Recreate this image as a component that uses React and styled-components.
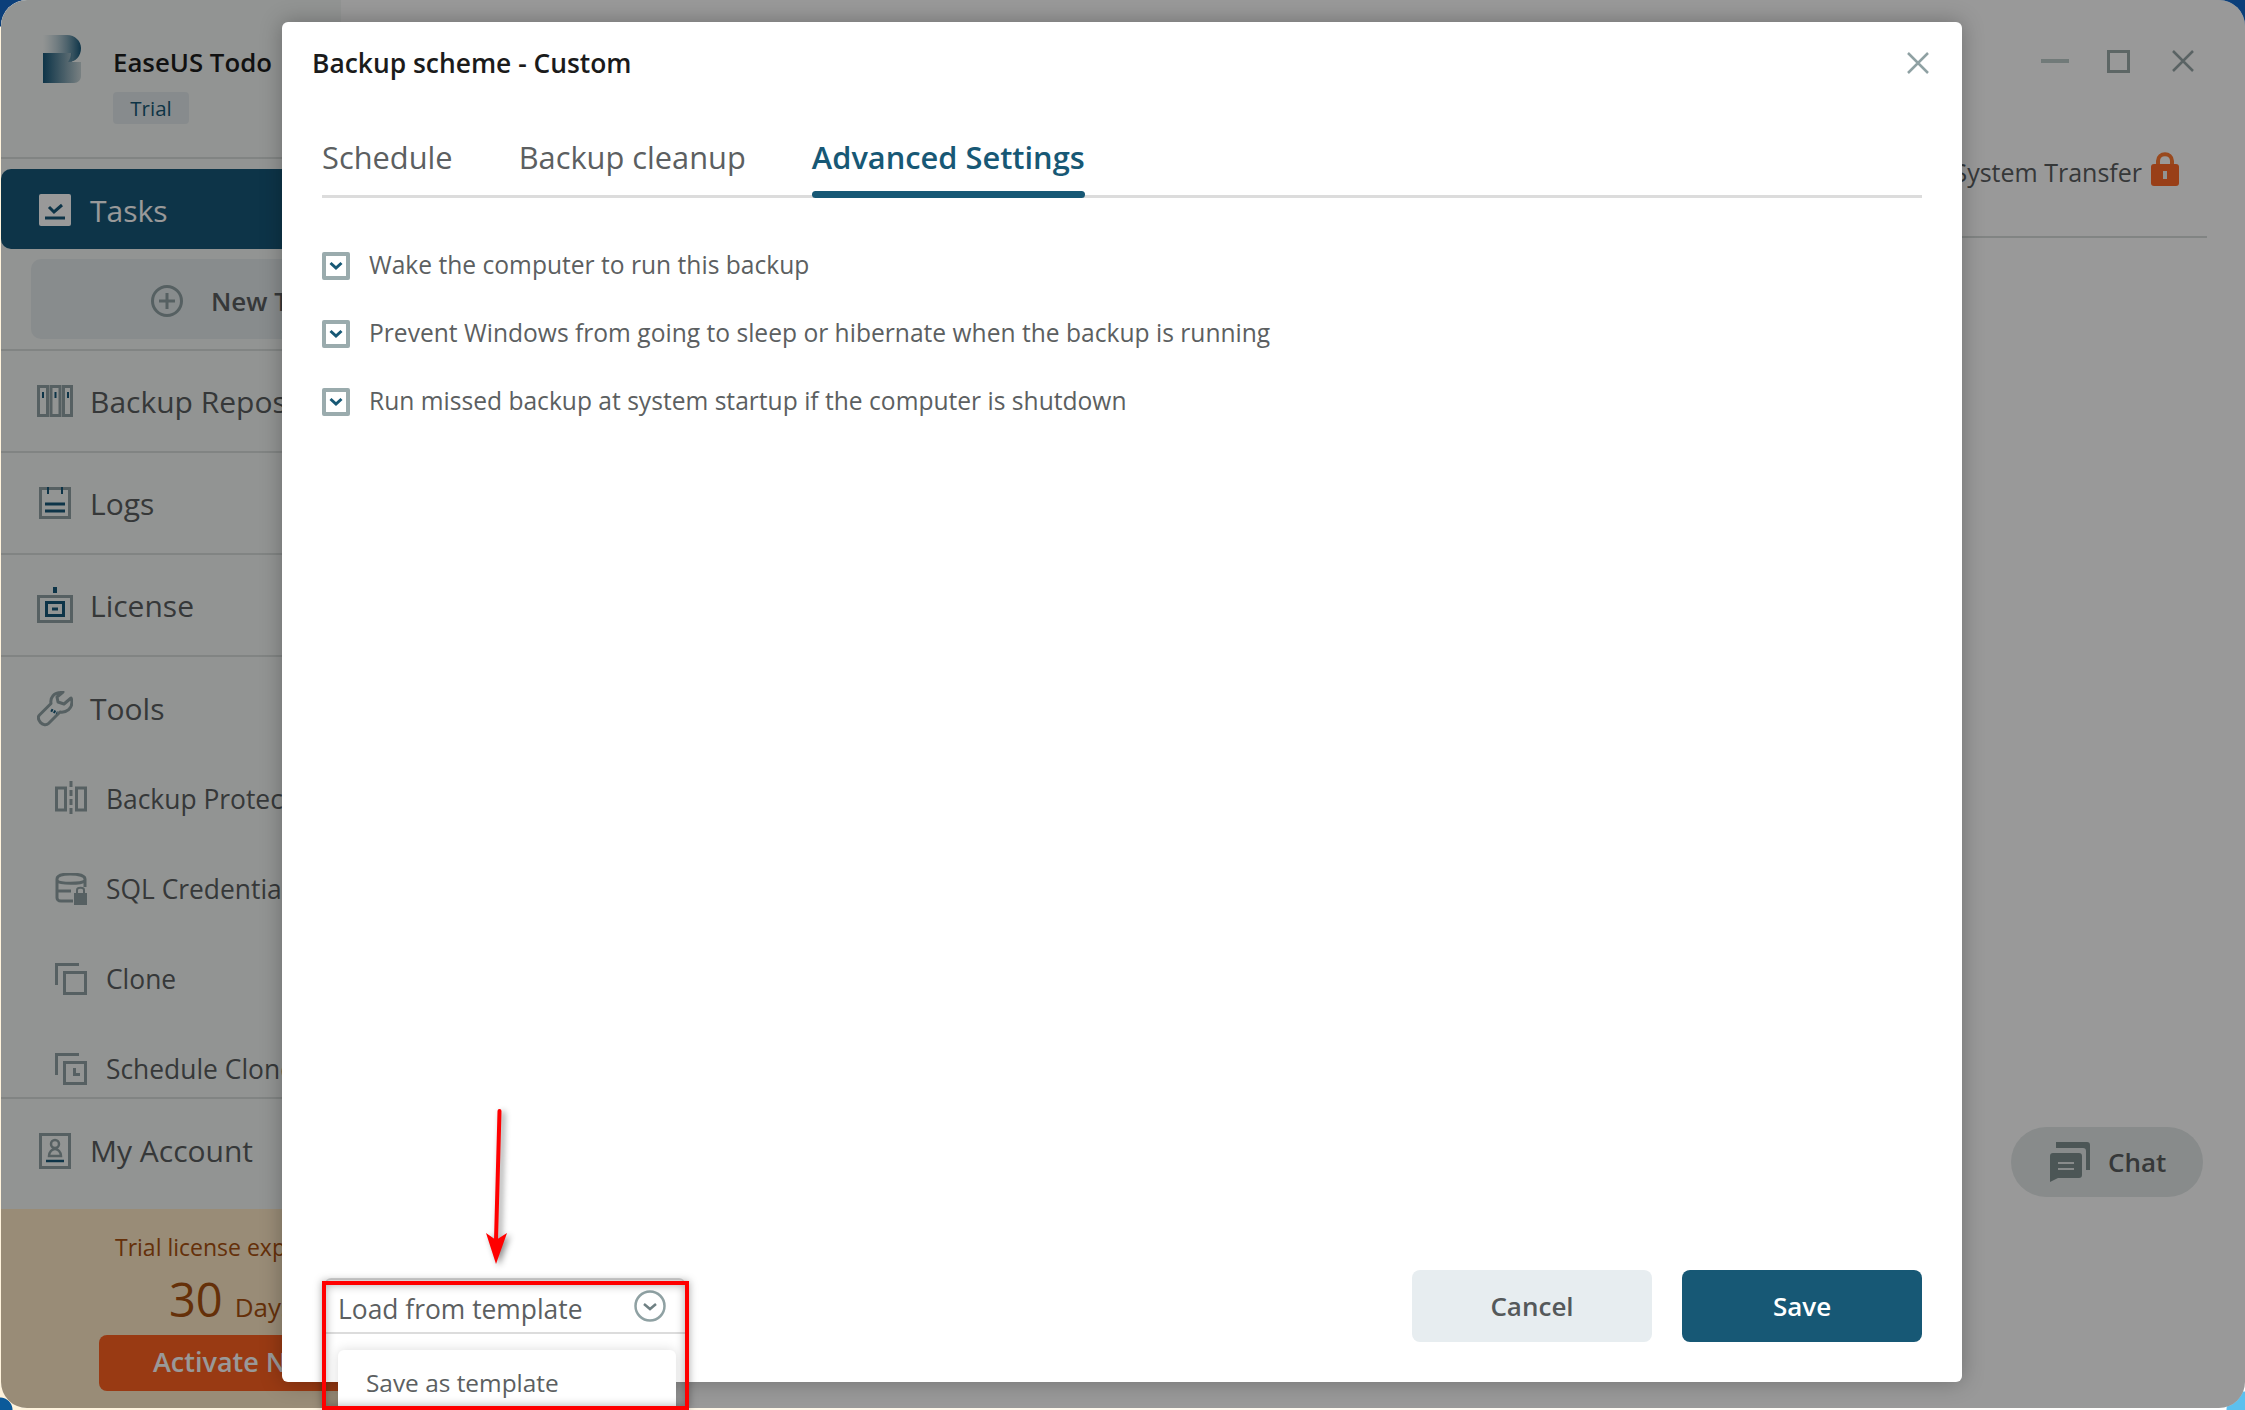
import React from 'react';
import styled, { createGlobalStyle } from 'styled-components';

const FONT = '"Open Sans", "Noto Sans", sans-serif';

const GlobalStyle = createGlobalStyle`
  html, body {
    margin: 0;
    padding: 0;
    height: 100%;
    overflow: hidden;
  }
  body {
    font-family: ${FONT};
    background:
      radial-gradient(circle at 0 0, #0b3f7a 0 26px, transparent 27px),
      radial-gradient(circle at 100% 0, #0b3f7a 0 26px, transparent 27px),
      radial-gradient(circle at 0 100%, #0b5a9a 0 12px, transparent 13px),
      radial-gradient(circle at 100% 100%, #5cc0ee 0 18px, transparent 19px),
      linear-gradient(90deg, #fff3dc, #ffffff);
  }
  * { box-sizing: border-box; }
`;

const Desktop = styled.div`
  position: relative;
  width: 2245px;
  height: 1410px;
  overflow: hidden;
`;

const Win = styled.div`
  position: relative;
  width: 2244px;
  height: 1408px;
  margin-left: 1px;
  background: #fff;
  border-radius: 26px;
  overflow: hidden;
  display: flex;
`;

const Sidebar = styled.aside`
  width: 340px;
  flex: none;
  background: #f3f7f5;
  display: flex;
  flex-direction: column;
`;

const Brand = styled.div`
  height: 159px;
  flex: none;
  padding: 35px 0 0 41px;
  display: flex;
  gap: 31px;
  border-bottom: 2px solid #d8dcda;
`;

const BrandText = styled.div`
  display: flex;
  flex-direction: column;
  align-items: flex-start;
  padding-top: 10px;
  gap: 13px;
`;

const BrandName = styled.div`
  font-size: 25.8px;
  line-height: 34px;
  font-weight: 600;
  color: #1d1d1d;
  white-space: nowrap;
`;

const Badge = styled.span`
  width: 76px;
  height: 32px;
  border-radius: 4px;
  background: #e2e8eb;
  color: #175875;
  font-size: 20.5px;
  line-height: 32px;
  text-align: center;
`;

const NavGroup = styled.div`
  flex: none;
  height: ${p => p.$h}px;
  border-bottom: 2px solid #d8dcda;
`;

const NavRow = styled.div`
  height: ${p => p.$h || 100}px;
  padding-left: 36px;
  display: flex;
  align-items: center;
  gap: 17px;
  font-size: 30px;
  color: ${p => (p.$active ? '#fff' : '#5a5e60')};
  white-space: nowrap;
`;

const TasksRow = styled(NavRow)`
  height: 80px;
  margin-top: 10px;
  padding-top: 2px;
  background: #175879;
  border-radius: 10px 0 0 10px;
`;

const ToolsRow = styled(NavRow)`
  height: 97px;
  padding-top: 6px;
`;

const AccountRow = styled(NavRow)`
  flex: none;
  height: 110px;
  padding-bottom: 7px;
`;

const IconSlot = styled.span`
  width: ${p => p.$w || 36}px;
  flex: none;
  display: flex;
  justify-content: center;
`;

const NewTask = styled.div`
  height: 80px;
  margin: 10px 0 0 30px;
  border-radius: 10px;
  background: #e3e9eb;
  display: flex;
  align-items: center;
  padding: 3px 0 0 120px;
  gap: 28px;
  font-size: 26px;
  font-weight: 600;
  color: #5a5e60;
  white-space: nowrap;
`;

const SubRow = styled.div`
  height: 90px;
  padding-left: 54px;
  display: flex;
  align-items: center;
  gap: 19px;
  font-size: 26.4px;
  color: #5a5e60;
  white-space: nowrap;
`;

const Promo = styled.div`
  flex: 1;
  background: #ffe9c6;
  display: flex;
  flex-direction: column;
  align-items: flex-start;
  padding-top: 22px;
`;

const PromoLine = styled.div`
  margin-left: 114px;
  font-size: 23px;
  line-height: 32px;
  color: #a8500f;
  white-space: nowrap;
`;

const PromoCount = styled.div`
  height: 62px;
  margin: 5px 0 0 168px;
  display: flex;
  align-items: baseline;
  gap: 12px;
  font-size: 26px;
  line-height: 62px;
  color: #a8500f;
  white-space: nowrap;
  b {
    font-weight: 400;
    font-size: 47px;
  }
`;

const ActivateBtn = styled.div`
  margin: 5px 0 0 98px;
  width: 300px;
  height: 56px;
  border-radius: 8px;
  background: #ff6121;
  color: #fff;
  font-size: 27px;
  font-weight: 600;
  line-height: 54px;
  padding-left: 54px;
  white-space: nowrap;
`;

const Main = styled.main`
  flex: 1;
  position: relative;
`;

const WinControls = styled.div`
  display: flex;
  justify-content: flex-end;
  align-items: center;
  height: 122px;
  gap: 38px;
  padding: 0 51px 0 0;
`;

const MaxBox = styled.svg`
  margin-right: 4px;
`;

const TopTabs = styled.div`
  height: 116px;
  margin-right: 38px;
  border-bottom: 2px solid #d8dcda;
  display: flex;
  justify-content: flex-end;
  align-items: flex-start;
  gap: 9px;
  padding: 30px 28px 0 0;
  font-size: 25px;
  line-height: 40px;
  color: #5a5e60;
  white-space: nowrap;
`;

const ChatPill = styled.div`
  position: absolute;
  left: 1670px;
  top: 1127px;
  width: 192px;
  height: 70px;
  border-radius: 35px;
  background: #e3e8e8;
  display: flex;
  align-items: center;
  padding-left: 39px;
  gap: 18px;
  font-size: 26px;
  font-weight: 600;
  color: #5a5e60;
`;

const Overlay = styled.div`
  position: absolute;
  inset: 0;
  background: rgba(0, 0, 0, 0.4);
`;

const Modal = styled.section`
  position: absolute;
  left: 282px;
  top: 22px;
  width: 1680px;
  height: 1360px;
  background: #fff;
  border-radius: 6px;
  box-shadow: 0 0 22px rgba(0, 0, 0, 0.28);
  padding: 0 40px;
  display: flex;
  flex-direction: column;
`;

const ModalHead = styled.header`
  height: 84px;
  margin-left: -10px;
  display: flex;
  align-items: center;
  justify-content: space-between;
  padding-bottom: 2px;
  font-size: 26.4px;
  font-weight: 600;
  color: #1b1b1b;
`;

const CloseBtn = styled.span`
  display: flex;
  margin-right: -7px;
`;

const TabBar = styled.nav`
  height: 67px;
  margin-top: 25px;
  flex: none;
  display: flex;
  gap: 66px;
  border-bottom: 3px solid #dcdcdc;
`;

const Tab = styled.div`
  position: relative;
  height: 67px;
  font-size: 30.8px;
  line-height: 52px;
  font-weight: ${p => (p.$active ? 600 : 500)};
  color: ${p => (p.$active ? '#175875' : '#5c5f61')};
  white-space: nowrap;
  ${p => p.$active && `
    &::after {
      content: '';
      position: absolute;
      left: 0;
      right: 0;
      bottom: 0;
      height: 7px;
      border-radius: 4px;
      background: #175875;
    }
  `}
`;

const Options = styled.div`
  margin-top: 52px;
  display: flex;
  flex-direction: column;
  gap: 40px;
`;

const Option = styled.label`
  display: flex;
  align-items: center;
  gap: 19px;
  height: 28px;
  font-size: 24.6px;
  color: #5c5f61;
  white-space: nowrap;
`;

const Check = styled.span`
  width: 28px;
  height: 28px;
  flex: none;
  margin-top: 4px;
  border: 4px solid #9aabad;
  border-radius: 2px;
  display: flex;
  align-items: center;
  justify-content: center;
`;

const ModalFoot = styled.footer`
  margin-top: auto;
  height: 112px;
  display: flex;
  justify-content: flex-end;
  gap: 30px;
`;

const Btn = styled.button`
  width: 240px;
  height: 72px;
  border: 0;
  border-radius: 8px;
  font-family: ${FONT};
  font-size: 26px;
  font-weight: 600;
  background: ${p => (p.$primary ? '#175875' : '#e7edf0')};
  color: ${p => (p.$primary ? '#fff' : '#55595b')};
`;

const TemplateMenu = styled.div`
  position: absolute;
  left: 325px;
  top: 1278px;
  width: 360px;
  border-top: 2px solid #d8d8d8;
  border-radius: 6px 6px 0 0;
`;

const TemplateHead = styled.div`
  height: 54px;
  padding: 0 19px 0 13px;
  border-bottom: 2px solid #dcdcdc;
  display: flex;
  align-items: center;
  justify-content: space-between;
  font-size: 26.4px;
  color: #5c5f61;
  span {
    padding-top: 5px;
  }
`;

const TemplateItem = styled.div`
  margin: 16px 0 0 13px;
  width: 338px;
  height: 70px;
  border-radius: 6px 6px 0 0;
  box-shadow: 0 0 12px rgba(0, 0, 0, 0.14);
  padding: 16px 0 0 28px;
  font-size: 24.4px;
  color: #5c5f61;
  background: #fff;
`;

const Callout = styled.div`
  position: absolute;
  left: 322px;
  top: 1281px;
  width: 367px;
  height: 129px;
  border: 4px solid #ff0000;
  box-shadow: 0 0 8px rgba(0, 0, 0, 0.35), inset 0 0 10px rgba(0, 0, 0, 0.32);
`;

const ArrowSvg = styled.svg`
  position: absolute;
  left: 470px;
  top: 1100px;
  filter: drop-shadow(3px 2px 3px rgba(0, 0, 0, 0.45));
`;

const LogoSvg = styled.svg`
  flex: none;
`;

const Logo = () => (
  <LogoSvg width="40" height="48" viewBox="0 0 40 48">
    <defs>
      <linearGradient id="lg1" x1="0" x2="1" y1="0" y2="0">
        <stop offset="0" stopColor="#f3f7f5" stopOpacity=".5" />
        <stop offset="1" stopColor="#175879" />
      </linearGradient>
      <linearGradient id="lg2" x1="0" x2="1" y1="0" y2="0">
        <stop offset="0" stopColor="#175879" />
        <stop offset="1" stopColor="#c9d6d8" />
      </linearGradient>
    </defs>
    <path d="M1 18H30V27H39V41C39 45 36 48 32 48H1Z" fill="url(#lg2)" />
    <path d="M1 0H25C33 0 39 6 39 13C39 21 34 27 26 27C28 24 29 21 29 18H1Z" fill="url(#lg1)" />
  </LogoSvg>
);

const Ico = ({ children, w = 32, h = 32 }) => (
  <IconSlot $w={32}>
    <svg width={w} height={h} viewBox={`0 0 ${w} ${h}`} fill="none">{children}</svg>
  </IconSlot>
);

const RowIcon = ({ children, w = 32, h = 32 }) => (
  <IconSlot>
    <svg width={w} height={h} viewBox={`0 0 ${w} ${h}`} fill="none">{children}</svg>
  </IconSlot>
);

const GRAY = '#8fa1a3';
const BLUE = '#175879';

const icons = {
  tasks: (
    <RowIcon>
      <rect width="32" height="32" rx="2" fill="#fff" />
      <path d="M10 13l5 5 8-7" stroke={BLUE} strokeWidth="3" />
      <path d="M6 24h20" stroke={BLUE} strokeWidth="3" />
    </RowIcon>
  ),
  plus: (
    <svg width="32" height="32" viewBox="0 0 32 32" fill="none">
      <circle cx="16" cy="16" r="14.5" stroke={GRAY} strokeWidth="3" />
      <path d="M16 8v16M8 16h16" stroke={GRAY} strokeWidth="3" />
    </svg>
  ),
  repo: (
    <RowIcon w={36}>
      <rect x="1.5" y="1.5" width="9" height="29" stroke={GRAY} strokeWidth="3" />
      <rect x="14" y="1.5" width="9" height="29" stroke={GRAY} strokeWidth="3" />
      <rect x="26.5" y="1.5" width="8" height="29" stroke={GRAY} strokeWidth="3" />
      <path d="M6 7v6M18.5 7v6M31 7v6" stroke={BLUE} strokeWidth="2" />
    </RowIcon>
  ),
  logs: (
    <RowIcon>
      <path d="M1.5 1.5h29v29h-29z" stroke={GRAY} strokeWidth="3" />
      <path d="M9 0v7M23 0v7" stroke={BLUE} strokeWidth="2" />
      <path d="M6 17h20M6 24h20" stroke={BLUE} strokeWidth="3" />
    </RowIcon>
  ),
  license: (
    <RowIcon w={36} h={36}>
      <rect x="1.5" y="9.5" width="33" height="25" stroke={GRAY} strokeWidth="3" />
      <path d="M18 0v6" stroke={BLUE} strokeWidth="4" />
      <rect x="9.5" y="15.5" width="17" height="13" stroke={BLUE} strokeWidth="3" />
      <path d="M15 22h6" stroke={BLUE} strokeWidth="3" />
    </RowIcon>
  ),
  tools: (
    <RowIcon w={36} h={36}>
      <path d="M24 1.5c-7 0-11 5-10 11L2.5 24c-2 2-1 5 1 7.5s6 3 8 1L23 21c7 1 12-4 12-10 0-2-.5-3-1-4l-7 6-6-2-1-5 6-5c-.5 0-1.5 0-2 0z" stroke={GRAY} strokeWidth="3" strokeLinejoin="round" />
      <path d="M14 19l6 3" stroke={BLUE} strokeWidth="3" strokeDasharray="2 1" />
    </RowIcon>
  ),
  account: (
    <RowIcon h={36}>
      <rect x="1.5" y="1.5" width="29" height="33" stroke={GRAY} strokeWidth="3" />
      <circle cx="16" cy="11" r="4" stroke={GRAY} strokeWidth="2.5" />
      <path d="M10 23c0-4 3-7 6-7s6 3 6 7z" stroke={GRAY} strokeWidth="2.5" />
      <path d="M7 28h18" stroke={BLUE} strokeWidth="2.5" />
    </RowIcon>
  ),
  protect: (
    <Ico w={32} h={36}>
      <rect x="1.5" y="7" width="9" height="22" stroke={GRAY} strokeWidth="3" />
      <rect x="21.5" y="7" width="9" height="22" stroke={GRAY} strokeWidth="3" />
      <path d="M16 0v36" stroke={GRAY} strokeWidth="3" strokeDasharray="6 3" />
    </Ico>
  ),
  sql: (
    <Ico>
      <path d="M18 28H6c-3 0-4-2-4-3V6c0-3 4-5 13-5s15 2 15 5v8" stroke={GRAY} strokeWidth="3" />
      <path d="M2 8c3 3 24 3 28 0M2 18h14" stroke={GRAY} strokeWidth="3" />
      <rect x="19" y="20" width="13" height="12" fill={GRAY} />
      <path d="M22 20v-3c0-3 7-3 7 0v3" stroke={GRAY} strokeWidth="2" />
    </Ico>
  ),
  clone: (
    <Ico>
      <path d="M24 1.5H1.5V22" stroke={GRAY} strokeWidth="3" />
      <rect x="9.5" y="9.5" width="21" height="21" stroke={GRAY} strokeWidth="3" />
    </Ico>
  ),
  schedClone: (
    <Ico>
      <path d="M24 1.5H1.5V22" stroke={GRAY} strokeWidth="3" />
      <rect x="9.5" y="9.5" width="21" height="21" stroke={GRAY} strokeWidth="3" />
      <path d="M18 15v8h7v-3h-4v-5z" fill={GRAY} />
    </Ico>
  ),
};

const CheckMark = () => (
  <svg width="14" height="10" viewBox="0 0 14 10" fill="none">
    <path d="M1.5 2l5.500 5 5.500-5" stroke="#175875" strokeWidth="3" />
  </svg>
);

const Cross = ({ size = 22, color = '#8fa1a3', width = 2.5 }) => (
  <svg width={size} height={size} viewBox="0 0 22 22" fill="none">
    <path d="M1 1l20 20M21 1L1 21" stroke={color} strokeWidth={width} />
  </svg>
);

const Lock = () => (
  <svg width="28" height="34" viewBox="0 0 28 34" fill="none">
    <path d="M7 15V9c0-9 14-9 14 0v6" stroke="#ff7a33" strokeWidth="4" />
    <rect y="12" width="28" height="22" rx="3" fill="#ff6a28" />
    <rect x="12" y="19" width="4" height="8" fill="#f3f3f3" />
  </svg>
);

const ChatIcon = () => (
  <svg width="40" height="40" viewBox="0 0 40 40" fill="none">
    <path d="M6 0H37C39 0 40 1 40 3V28H36V9C36 7 35 6 33 6H6Z" fill="#7f8f8f" />
    <path d="M3 11H29C31 11 32 12 32 14V33C32 35 31 36 29 36H8L0 40V14C0 12 1 11 3 11Z" fill="#7f8f8f" />
    <path d="M8 21h16M8 27h16" stroke="#e3e8e8" strokeWidth="2" />
  </svg>
);

const Chevron = () => (
  <svg width="32" height="32" viewBox="0 0 32 32" fill="none">
    <circle cx="16" cy="16" r="14.5" stroke="#8fa1a3" strokeWidth="2.5" />
    <path d="M10 14l6 5 6-5" stroke="#6f8083" strokeWidth="2.5" />
  </svg>
);

const App = () => (
  <Desktop>
    <GlobalStyle />
    <Win>
      <Sidebar>
        <Brand>
          <Logo />
          <BrandText>
            <BrandName>EaseUS Todo</BrandName>
            <Badge>Trial</Badge>
          </BrandText>
        </Brand>
        <NavGroup $h={192}>
          <TasksRow $active>{icons.tasks}<span>Tasks</span></TasksRow>
          <NewTask>{icons.plus}<span>New Task</span></NewTask>
        </NavGroup>
        <NavGroup $h={102}><NavRow>{icons.repo}<span>Backup Repository</span></NavRow></NavGroup>
        <NavGroup $h={102}><NavRow>{icons.logs}<span>Logs</span></NavRow></NavGroup>
        <NavGroup $h={102}><NavRow>{icons.license}<span>License</span></NavRow></NavGroup>
        <NavGroup $h={442}>
          <ToolsRow>{icons.tools}<span>Tools</span></ToolsRow>
          <SubRow>{icons.protect}<span>Backup Protection</span></SubRow>
          <SubRow>{icons.sql}<span>SQL Credentials</span></SubRow>
          <SubRow>{icons.clone}<span>Clone</span></SubRow>
          <SubRow>{icons.schedClone}<span>Schedule Clone</span></SubRow>
        </NavGroup>
        <AccountRow>{icons.account}<span>My Account</span></AccountRow>
        <Promo>
          <PromoLine>Trial license expires in</PromoLine>
          <PromoCount><b>30</b> Days</PromoCount>
          <ActivateBtn>Activate Now</ActivateBtn>
        </Promo>
      </Sidebar>
      <Main>
        <WinControls>
          <svg width="28" height="4"><rect width="28" height="4" fill="#bcccca" /></svg>
          <MaxBox width="23" height="23" fill="none"><rect x="1.5" y="1.5" width="20" height="20" stroke="#9baaa8" strokeWidth="3" /></MaxBox>
          <Cross color="#97a5a7" />
        </WinControls>
        <TopTabs>
          <span>System Transfer</span>
          <Lock />
        </TopTabs>
        <ChatPill><ChatIcon /><span>Chat</span></ChatPill>
      </Main>
      <Overlay />
    </Win>
    <Modal>
      <ModalHead>
        <span>Backup scheme - Custom</span>
        <CloseBtn><Cross /></CloseBtn>
      </ModalHead>
      <TabBar>
        <Tab>Schedule</Tab>
        <Tab>Backup cleanup</Tab>
        <Tab $active>Advanced Settings</Tab>
      </TabBar>
      <Options>
        <Option><Check><CheckMark /></Check>Wake the computer to run this backup</Option>
        <Option><Check><CheckMark /></Check>Prevent Windows from going to sleep or hibernate when the backup is running</Option>
        <Option><Check><CheckMark /></Check>Run missed backup at system startup if the computer is shutdown</Option>
      </Options>
      <ModalFoot>
        <Btn>Cancel</Btn>
        <Btn $primary>Save</Btn>
      </ModalFoot>
    </Modal>
    <TemplateMenu>
      <TemplateHead>
        <span>Load from template</span>
        <Chevron />
      </TemplateHead>
      <TemplateItem>Save as template</TemplateItem>
    </TemplateMenu>
    <Callout />
    <ArrowSvg width="60" height="170" viewBox="0 0 60 170" fill="none">
      <path d="M29.5 11L26 140" stroke="#f00" strokeWidth="4" strokeLinecap="round" />
      <path d="M16 133L26 140L37 133L26 164Z" fill="#f00" />
    </ArrowSvg>
  </Desktop>
);

export default App;
